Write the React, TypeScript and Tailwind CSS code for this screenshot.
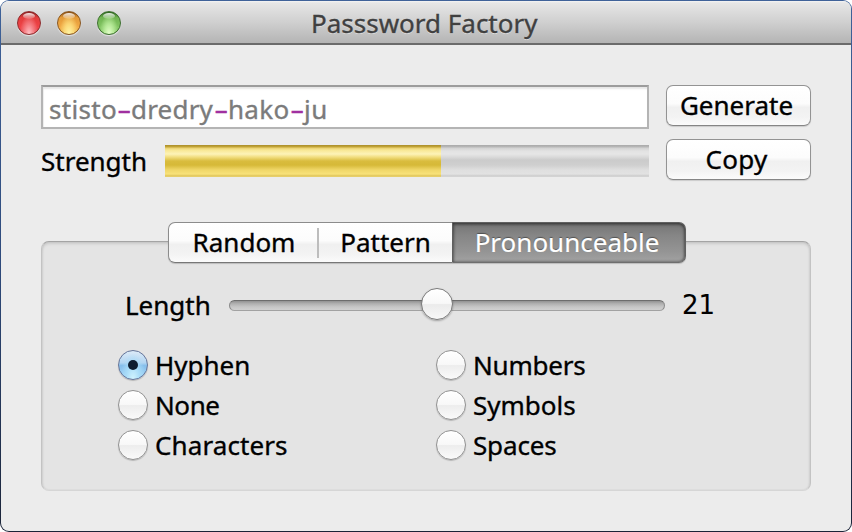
import type { ReactNode } from "react";

const buttonFace =
  "bg-[linear-gradient(180deg,#ffffff_0%,#fcfcfc_45%,#f0f0f0_55%,#f3f3f3_80%,#fbfbfb_100%)]";

function TrafficLight({ className }: { className: string }) {
  return (
    <span
      className={`relative block h-6 w-6 overflow-hidden rounded-full border shadow-[0_1px_1px_rgba(255,255,255,0.6)] ${className}`}
    >
      <span className="absolute left-[5px] top-[1px] h-[6px] w-3 rounded-[50%] bg-linear-to-b from-white/90 to-white/10" />
    </span>
  );
}

function PushButton({ children, className = "" }: { children: ReactNode; className?: string }) {
  return (
    <button
      className={`flex h-[41px] w-[145px] justify-center rounded-[7px] border-[1.5px] border-[#939393] border-b-[#858585] pr-1 leading-[38px] shadow-[0_1px_1px_rgba(0,0,0,0.14)] ${buttonFace} ${className}`}
    >
      {children}
    </button>
  );
}

function Hyphen() {
  return (
    <span className="flex w-[14px] justify-center text-[#a030a0]">
      <span className="inline-block scale-x-[1.66] [-webkit-text-stroke:0.5px]">-</span>
    </span>
  );
}

function Radio({ label, checked = false, spacing = "" }: { label: string; checked?: boolean; spacing?: string }) {
  return (
    <label className="flex h-10 items-center gap-[7px]">
      <span
        className={`flex h-[30px] w-[30px] shrink-0 items-center justify-center rounded-full border-[1.5px] shadow-[0_1px_1px_rgba(0,0,0,0.2)] ${
          checked
            ? "border-[#65759a] bg-[radial-gradient(ellipse_at_50%_105%,#d5f6ff_0%,#a9dcf8_35%,transparent_65%),linear-gradient(180deg,#dcebf8_0%,#b4d6f2_42%,#86bfec_52%,#a6d8f8_100%)]"
            : "border-[#929292] bg-[linear-gradient(180deg,#ffffff_0%,#f8f8f8_48%,#ededed_52%,#fafafa_100%)]"
        }`}
      >
        {checked && <span className="h-[10px] w-[10px] rounded-full bg-[#101e30]" />}
      </span>
      <span className={`h-10 leading-10 ${spacing}`}>{label}</span>
    </label>
  );
}

export default function App() {
  return (
    <div className="h-[532px] w-[852px] overflow-hidden bg-white font-['Noto_Sans','Open_Sans',sans-serif] text-[26px] text-black [-webkit-text-stroke:0.35px]">
      <div className="h-full rounded-[9px] bg-[linear-gradient(180deg,#3f6299_0%,#2e4a7b_50%,#1b2438_100%)] p-px">
        <div className="flex h-full flex-col overflow-hidden rounded-[8px] bg-[#ececec]">
          <header className="grid h-[44px] shrink-0 grid-cols-[310px_1fr] border-b-2 border-[#6b6b6b] bg-[linear-gradient(180deg,#f4f4f4_0px,#e6e6e6_2px,#d0d0d0_50%,#b4b4b4_100%)]">
            <div className="flex gap-4 pl-4 pt-[10px]">
              <TrafficLight className="border-[#8e2a2c] bg-[radial-gradient(ellipse_at_50%_100%,#ffc4c8_0%,#f58085_30%,transparent_60%),linear-gradient(180deg,#8e2424_0%,#e23c3c_25%,#f04448_70%,#d84450_100%)]" />
              <TrafficLight className="border-[#8a5620] bg-[radial-gradient(ellipse_at_50%_100%,#fff6a8_0%,#fbd776_32%,transparent_62%),linear-gradient(180deg,#8a5016_0%,#e39a38_25%,#f2ab46_70%,#dcae4c_100%)]" />
              <TrafficLight className="border-[#3c702e] bg-[radial-gradient(ellipse_at_50%_100%,#e6ffcc_0%,#b4e896_32%,transparent_62%),linear-gradient(180deg,#2c6420_0%,#70b452_25%,#84c664_70%,#7cba60_100%)]" />
            </div>
            <h1 className="h-[42px] whitespace-nowrap leading-[44px] text-[#404040] [text-shadow:0_1px_0_rgba(255,255,255,0.5)]">
              Passsword Factory
            </h1>
          </header>

          <main className="flex flex-1 flex-col px-[40px] pt-[40px]">
            <section className="flex justify-between">
              <div className="w-[608px]">
                <div className="flex h-[44px] border-2 border-[#b4b4b4] border-t-[#9c9c9c] bg-white pl-[6px] leading-[44px] text-[#7b7b7b] shadow-[inset_0_3px_2px_-1px_#e6e6e6,inset_1px_0_1px_#eeeeee]">
                  <span className="w-[68px] tracking-[0.3px]">stisto</span>
                  <Hyphen />
                  <span className="w-[83px] tracking-[0.2px]">dredry</span>
                  <Hyphen />
                  <span className="w-[62px] tracking-[0.3px]">hako</span>
                  <Hyphen />
                  <span className="tracking-[0.5px]">ju</span>
                </div>
                <div className="mt-[16px] flex h-8">
                  <span className="w-[124px] leading-[32px]">Strength</span>
                  <div className="flex flex-1 bg-[linear-gradient(180deg,#a9a9a9_0px,#b8b8b8_2px,#d2d2d2_3px,#e2e2e2_6px,#e6e6e6_9px,#dadada_12px,#cbcbcb_15px,#cfcfcf_20px,#dfdfdf_25px,#e2e2e2_29px,#cccccc_31px,#dadada_32px)]">
                    <div className="w-[276px] bg-[linear-gradient(180deg,#a98c2a_0px,#c6a83a_2px,#e8d070_3px,#f8e793_5px,#fdf3b8_9px,#f2de80_12px,#d9bc3e_16px,#d6b938_20px,#f0d769_25px,#f8e27a_29px,#dfc45a_31px,#ecd87c_32px)]" />
                  </div>
                </div>
              </div>
              <div className="mr-px flex flex-col gap-[13px]">
                <PushButton className="-mr-px">Generate</PushButton>
                <PushButton className="-mr-px tracking-[0.3px]">Copy</PushButton>
              </div>
            </section>

            <section className="mt-[61px] flex h-[250px] w-[770px] flex-col items-center rounded-[8px] border border-x-[#c3c3c3] border-b-[#d6d6d6] border-t-[#a4a4a4] bg-[#e4e4e4] shadow-[inset_0_2px_3px_rgba(0,0,0,0.11),inset_1px_0_2px_rgba(0,0,0,0.05),inset_-1px_0_2px_rgba(0,0,0,0.05)]">
              <nav className="ml-[2px] mt-[-20px] flex h-[41px] w-[518px] shrink-0 rounded-[7px] leading-[36px] shadow-[0_1px_1px_rgba(0,0,0,0.18)]">
                <div className={`flex w-[284px] rounded-l-[7px] border-[1.5px] border-r-0 border-[#8c8c8c] border-b-[#777777] ${buttonFace}`}>
                  <button className="w-[148px] pb-[2px] pl-[2px]">Random</button>
                  <span className="mt-[5px] h-[30px] w-[2px] bg-[#bdbdbd]" />
                  <button className="flex-1 pb-[2px]">Pattern</button>
                </div>
                <button className="flex-1 rounded-r-[7px] border-[1.5px] border-[#606060] border-b-[#6e6e6e] bg-[linear-gradient(180deg,#747474_0%,#858585_30%,#959595_75%,#a2a2a2_100%)] pb-[2px] pr-[4px] text-white shadow-[inset_0_2px_3px_rgba(0,0,0,0.3),inset_-1px_0_3px_rgba(0,0,0,0.3),inset_1px_0_3px_rgba(0,0,0,0.25)] [-webkit-text-stroke:0.2px] [text-shadow:0_-1px_1px_rgba(0,0,0,0.4)]">
                  Pronounceable
                </button>
              </nav>

              <div className="mt-[22px] flex h-10 w-[604px] items-center">
                <span className="w-[105px] pl-px">Length</span>
                <div className="relative h-[11px] w-[436px] rounded-full border border-x-[#8a8a8a] border-b-[#a2a2a2] border-t-[#6d6d6d] bg-[linear-gradient(180deg,#929292_0%,#b0b0b0_30%,#c6c6c6_65%,#d0d0d0_100%)]">
                  <span className="absolute left-[191px] top-[-13px] h-8 w-8 rounded-full border-[1.5px] border-[#7b7b7b] bg-[linear-gradient(180deg,#ffffff_0%,#f8f8f8_48%,#ebebeb_52%,#f8f8f8_100%)] shadow-[0_1px_2px_rgba(0,0,0,0.3)]" />
                </div>
                <span className="ml-[17px] font-['DejaVu_Sans',sans-serif] text-[26px] [-webkit-text-stroke:0.1px]">21</span>
              </div>

              <div className="mt-[20px] grid w-[616px] grid-cols-[318px_1fr]">
                <div className="flex flex-col">
                  <Radio label="Hyphen" checked />
                  <Radio label="None" spacing="tracking-[-0.4px]" />
                  <Radio label="Characters" spacing="tracking-[0.1px]" />
                </div>
                <div className="flex flex-col">
                  <Radio label="Numbers" spacing="tracking-[-0.2px]" />
                  <Radio label="Symbols" />
                  <Radio label="Spaces" spacing="tracking-[-0.15px]" />
                </div>
              </div>
            </section>
          </main>
        </div>
      </div>
    </div>
  );
}
